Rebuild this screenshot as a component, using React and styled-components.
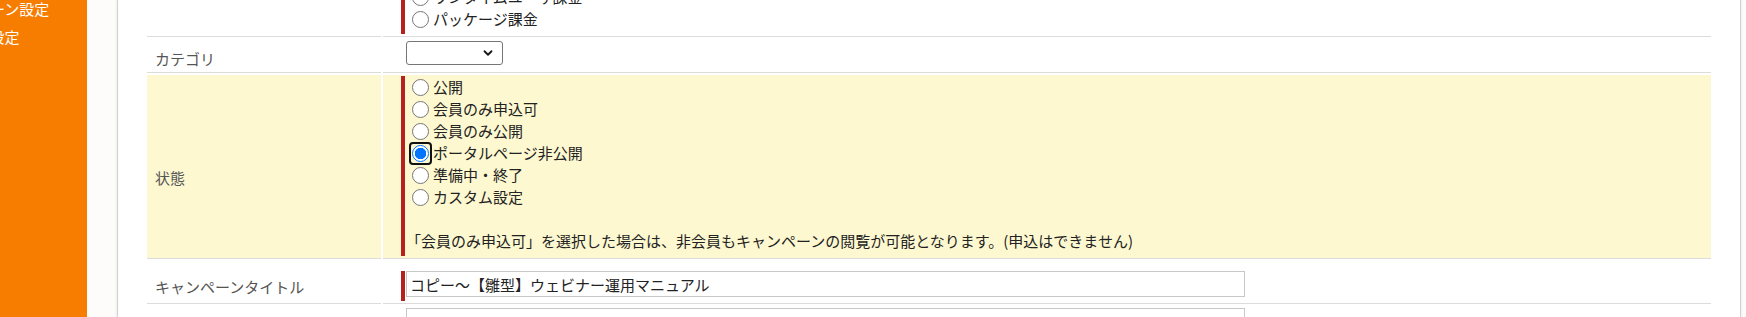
import React from "react";
import styled, { createGlobalStyle } from "styled-components";
import { ChevronDown } from "lucide-react";

const GlobalStyle = createGlobalStyle`
  html, body {
    margin: 0;
    padding: 0;
    background: #fdfcfa;
  }
  body {
    font-family: "Noto Sans CJK JP", "Noto Sans", sans-serif;
    font-size: 15px;
    color: #222;
    overflow: hidden;
  }
`;

const billing = ["無料", "サブスクリプション課金", "ワンタイムユーザ課金", "パッケージ課金"];
const states = [
  "公開",
  "会員のみ申込可",
  "会員のみ公開",
  "ポータルページ非公開",
  "準備中・終了",
  "カスタム設定",
];

const App = () => {
  return (
    <>
      <GlobalStyle />
      <Page>
        <Sidebar>
          <MenuList>
            <MenuItem>キャンペーン設定</MenuItem>
            <MenuItem>フォーム設定</MenuItem>
          </MenuList>
        </Sidebar>
        <Panel>
          <FormGrid>
            <Label $pt={0}>課金方式</Label>
            <Value $pt={1} $pb={2}>
              <Bar>
                {billing.map((b) => (
                  <RadioOption key={b} label={b} name="billing" />
                ))}
              </Bar>
            </Value>

            <Label $pt={7}>カテゴリ</Label>
            <Value $pt={2} $pb={7}>
              <SelectWrap>
                <Select defaultValue="">
                  <option value=""></option>
                </Select>
                <ChevronDown className="chev" size={14} strokeWidth={3.2} />
              </SelectWrap>
            </Value>

            <Label $pt={23} $yellow>状態</Label>
            <Value $pt={1} $pb={2} $yellow>
              <Bar>
                {states.map((s) => (
                  <RadioOption
                    key={s}
                    label={s}
                    name="state"
                    checked={s === "ポータルページ非公開"}
                  />
                ))}
                <Note>
                  「会員のみ申込可」を選択した場合は、非会員もキャンペーンの閲覧が可能となります。(申込はできません)
                </Note>
              </Bar>
            </Value>

            <Label $pt={10}>キャンペーンタイトル</Label>
            <Value $pt={10} $pb={2}>
              <Bar>
                <TextInput defaultValue="コピー～【雛型】ウェビナー運用マニュアル" />
              </Bar>
            </Value>

            <Label $pt={0}>キャンペーン説明</Label>
            <Value $pt={2} $pb={8}>
              <TextArea />
            </Value>
          </FormGrid>
        </Panel>
      </Page>
    </>
  );
};

const RadioOption = ({ label, name, checked }) => (
  <Option>
    <RadioBox $focus={checked}>
      <Radio type="radio" name={name} defaultChecked={checked} />
    </RadioBox>
    {label}
  </Option>
);

export default App;

const Page = styled.div`
  display: flex;
  height: 317px;
  overflow: hidden;
  background: #fdfcfa;
`;

const Sidebar = styled.nav`
  width: 87px;
  flex-shrink: 0;
  background: #f67d00;
  overflow: hidden;
`;

const MenuList = styled.ul`
  list-style: none;
  margin: -5px 0 0 -70px;
  padding: 0;
`;

const MenuItem = styled.li`
  color: #fff;
  white-space: nowrap;
  line-height: 28px;
  font-size: 15px;
`;

const Panel = styled.main`
  flex: 1;
  margin: 0 5px 0 30px;
  padding: 0 29px;
  background: #fff;
  border-left: 1px solid #d2d2d2;
  border-right: 1px solid #d2d2d2;
  box-shadow: 0 0 3px rgba(0, 0, 0, 0.1);
  overflow: hidden;
`;

const FormGrid = styled.div`
  display: grid;
  grid-template-columns: 234px 1fr;
  gap: 2px;
  margin-top: -59px;
`;

const Cell = styled.div`
  background: ${(p) => (p.$yellow ? "#fdf8d0" : "#fff")};
  border-bottom: 1px solid #dcdcdc;
`;

const Label = styled(Cell)`
  display: flex;
  align-items: center;
  padding: ${(p) => p.$pt}px 8px 0;
  color: #555;
  line-height: 22px;
`;

const Value = styled(Cell)`
  padding: ${(p) => p.$pt}px 0 ${(p) => p.$pb}px 18px;
`;

const Bar = styled.div`
  border-left: 4px solid #b5211f;
  padding-bottom: 4px;
  color: #222;
`;

const Option = styled.label`
  display: flex;
  align-items: center;
  height: 22px;
  line-height: 22px;
  white-space: nowrap;
`;

const RadioBox = styled.span`
  display: inline-flex;
  align-items: center;
  justify-content: center;
  width: 23px;
  height: 23px;
  box-sizing: border-box;
  margin: 0 1px 0 4px;
  border: 2px solid ${(p) => (p.$focus ? "#111" : "transparent")};
  border-radius: 4px;
`;

const Radio = styled.input`
  appearance: none;
  width: 17px;
  height: 17px;
  margin: 0;
  box-sizing: border-box;
  border: 1px solid #767676;
  border-radius: 50%;
  background: #fff;
  &:checked {
    border-color: #0075ff;
    background: radial-gradient(circle, #0075ff 0, #0075ff 5.4px, #fff 6px);
  }
  &:focus {
    outline: none;
  }
`;

const Note = styled.p`
  margin: 22px 0 0 1px;
  line-height: 22px;
  white-space: nowrap;
`;

const SelectWrap = styled.div`
  position: relative;
  width: 97px;
  margin-left: 5px;
  .chev {
    position: absolute;
    right: 8px;
    top: 5px;
    color: #1a1a1a;
    pointer-events: none;
  }
`;

const Select = styled.select`
  appearance: none;
  display: block;
  width: 97px;
  height: 24px;
  box-sizing: border-box;
  border: 1px solid #767676;
  border-radius: 3px;
  background: #fff;
  font: inherit;
`;

const TextInput = styled.input`
  display: block;
  width: 839px;
  height: 26px;
  box-sizing: border-box;
  margin: 0 0 0 1px;
  padding: 0 3px;
  border: 1px solid #c8c8c8;
  font-family: "Noto Sans CJK JP", "Noto Sans", sans-serif;
  font-size: 15px;
  color: #222;
  outline: none;
`;

const TextArea = styled.textarea`
  display: block;
  width: 839px;
  height: 120px;
  box-sizing: border-box;
  margin-left: 5px;
  border: 1px solid #c8c8c8;
  resize: none;
`;
